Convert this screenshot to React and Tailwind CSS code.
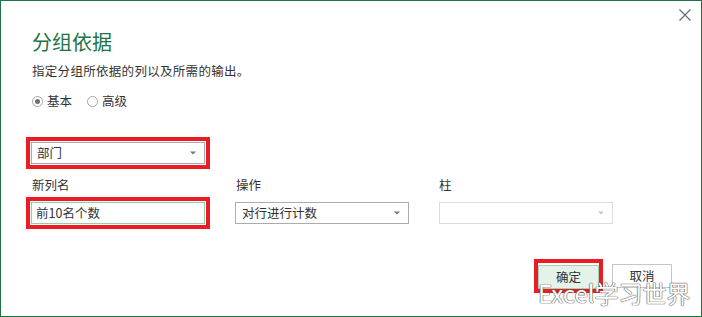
import React from 'react';

const Arrow = ({ color = '#666' }) => (
  <svg width="6" height="4" viewBox="0 0 6 4" className="shrink-0">
    <path d="M0 0.5 L6 0.5 L3 3.5 Z" fill={color} />
  </svg>
);

const Select = ({ value, disabled, className = '' }) => (
  <div
    className={`flex items-center justify-between bg-white border ${
      disabled ? 'border-[#dcdcdc]' : 'border-[#ababab]'
    } pl-[5px] pr-[8px] ${className}`}
  >
    <span className="text-[12.5px] leading-[16px] text-[#333] whitespace-nowrap">{value}</span>
    <Arrow color={disabled ? '#c8c8c8' : '#777'} />
  </div>
);

const Radio = ({ checked, label }) => (
  <label className="flex items-center gap-[4px]">
    <span className="w-[11px] h-[11px] rounded-full border border-[#a6a6a6] bg-white flex items-center justify-center">
      {checked && <span className="w-[5px] h-[5px] rounded-full bg-[#707070]" />}
    </span>
    <span className="text-[12.5px] leading-[16px] text-[#333]">{label}</span>
  </label>
);

export default function App() {
  return (
    <div className="relative w-[702px] h-[317px] bg-white border border-[#217346] font-['Noto_Sans_CJK_SC','Microsoft_YaHei',sans-serif] overflow-hidden">
      {/* close button */}
      <button className="absolute top-[8px] right-[10px] w-[12px] h-[12px]">
        <svg width="12" height="12" viewBox="0 0 12 12">
          <path d="M0.5 0.5 L11.5 11.5 M11.5 0.5 L0.5 11.5" stroke="#666" strokeWidth="1.1" />
        </svg>
      </button>

      <div className="flex flex-col pl-[31px] pr-[29px] pt-[29px]">
        <h1 className="text-[20px] leading-[24px] text-[#217346] font-normal">分组依据</h1>
        <p className="mt-[9px] text-[12.5px] leading-[16px] text-[#333] tracking-[0.3px]">指定分组所依据的列以及所需的输出。</p>

        <div className="mt-[14px] flex items-center gap-[15px]">
          <Radio checked label="基本" />
          <Radio label="高级" />
        </div>

        {/* group by column */}
        <div className="mt-[28px] -ml-[6px] w-[184px] h-[32px] border-4 border-[#ec1c24] p-px">
          <Select value="部门" className="h-full" />
        </div>

        {/* new column / operation / column */}
        <div className="mt-[8px] flex">
          <div className="flex flex-col">
            <span className="text-[12.5px] leading-[16px] text-[#333]">新列名</span>
            <div className="mt-[4px] -ml-[6px] w-[184px] h-[32px] border-4 border-[#ec1c24] p-px">
              <div className="h-full border border-[#8fd0ab] bg-white flex items-center pl-[4px] text-[12.5px] leading-[16px] text-[#333]">
                前10名个数
              </div>
            </div>
          </div>

          <div className="ml-[25px] flex flex-col">
            <span className="text-[12.5px] leading-[16px] text-[#333] ml-px">操作</span>
            <div className="mt-[4px] h-[32px] flex items-center">
              <Select value="对行进行计数" className="w-[174px] h-[22px] pl-[6px]" />
            </div>
          </div>

          <div className="ml-[30px] flex flex-col">
            <span className="text-[12.5px] leading-[16px] text-[#333]">柱</span>
            <div className="mt-[4px] h-[32px] flex items-center">
              <Select value="" disabled className="w-[174px] h-[22px]" />
            </div>
          </div>
        </div>

        {/* buttons */}
        <div className="mt-[30px] flex justify-end items-center gap-[9px]">
          <div className="border-4 border-[#ec1c24]">
            <button className="w-[61px] h-[24px] bg-[#e5f2ea] border border-[#9fd3b4] text-[12.5px] leading-[16px] text-[#333]">
              确定
            </button>
          </div>
          <button className="w-[60px] h-[24px] bg-white border border-[#c6c6c6] text-[12.5px] leading-[16px] text-[#333]">
            取消
          </button>
        </div>
      </div>

      {/* watermark */}
      <div className="absolute left-[537px] top-[277px] text-[24px] leading-[30px] text-white [text-shadow:0_0_1px_#555,0_0_1px_#555,0_0_1px_#555]">
        Excel学习世界
      </div>
    </div>
  );
}
